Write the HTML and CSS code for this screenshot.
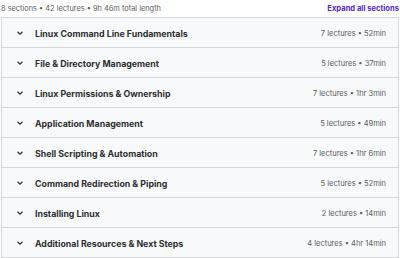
FILE: index.html
```html
<!DOCTYPE html>
<html lang="en">
<head>
  <meta charset="UTF-8">
  <title>Course content</title>
  <link rel="stylesheet" href="styles.css">
</head>
<body>

<div class="curriculum">
  <div class="summary">
    <span class="stats">8 sections • 42 lectures • 9h 46m total length</span>
    <button class="expand-all">Expand all sections</button>
  </div>

  <div class="sections">
    <div class="section">
      <span class="chevron"><svg width="8" height="8" viewBox="0 0 8 8"><path d="M1.5 2.8 L4 5.2 L6.5 2.8" fill="none" stroke="#2d2f31" stroke-width="1.2"/></svg></span>
      <span class="title">Linux Command Line Fundamentals</span>
      <span class="meta">7 lectures • 52min</span>
    </div>
    <div class="section">
      <span class="chevron"><svg width="8" height="8" viewBox="0 0 8 8"><path d="M1.5 2.8 L4 5.2 L6.5 2.8" fill="none" stroke="#2d2f31" stroke-width="1.2"/></svg></span>
      <span class="title">File &amp; Directory Management</span>
      <span class="meta">5 lectures • 37min</span>
    </div>
    <div class="section">
      <span class="chevron"><svg width="8" height="8" viewBox="0 0 8 8"><path d="M1.5 2.8 L4 5.2 L6.5 2.8" fill="none" stroke="#2d2f31" stroke-width="1.2"/></svg></span>
      <span class="title">Linux Permissions &amp; Ownership</span>
      <span class="meta">7 lectures • 1hr 3min</span>
    </div>
    <div class="section">
      <span class="chevron"><svg width="8" height="8" viewBox="0 0 8 8"><path d="M1.5 2.8 L4 5.2 L6.5 2.8" fill="none" stroke="#2d2f31" stroke-width="1.2"/></svg></span>
      <span class="title">Application Management</span>
      <span class="meta">5 lectures • 49min</span>
    </div>
    <div class="section">
      <span class="chevron"><svg width="8" height="8" viewBox="0 0 8 8"><path d="M1.5 2.8 L4 5.2 L6.5 2.8" fill="none" stroke="#2d2f31" stroke-width="1.2"/></svg></span>
      <span class="title">Shell Scripting &amp; Automation</span>
      <span class="meta">7 lectures • 1hr 6min</span>
    </div>
    <div class="section">
      <span class="chevron"><svg width="8" height="8" viewBox="0 0 8 8"><path d="M1.5 2.8 L4 5.2 L6.5 2.8" fill="none" stroke="#2d2f31" stroke-width="1.2"/></svg></span>
      <span class="title">Command Redirection &amp; Piping</span>
      <span class="meta">5 lectures • 52min</span>
    </div>
    <div class="section">
      <span class="chevron"><svg width="8" height="8" viewBox="0 0 8 8"><path d="M1.5 2.8 L4 5.2 L6.5 2.8" fill="none" stroke="#2d2f31" stroke-width="1.2"/></svg></span>
      <span class="title">Installing Linux</span>
      <span class="meta">2 lectures • 14min</span>
    </div>
    <div class="section">
      <span class="chevron"><svg width="8" height="8" viewBox="0 0 8 8"><path d="M1.5 2.8 L4 5.2 L6.5 2.8" fill="none" stroke="#2d2f31" stroke-width="1.2"/></svg></span>
      <span class="title">Additional Resources &amp; Next Steps</span>
      <span class="meta">4 lectures • 4hr 14min</span>
    </div>
  </div>
</div>

</body>
</html>
```

FILE: styles.css
```css
body {
  margin: 0;
  font-family: Inter, 'Liberation Sans', sans-serif;
  color: #2d2f31;
  background: #fff;
}

.curriculum {
  width: 398px;
  margin-left: 1px;
}

.summary {
  display: flex;
  justify-content: space-between;
  align-items: center;
  height: 16px;
  padding-bottom: 1px;
}

.stats {
  font-size: 7.4px;
  color: #595d61;
}

.expand-all {
  background: none;
  border: none;
  padding: 0;
  font-family: inherit;
  font-size: 7.6px;
  font-weight: bold;
  color: #5624d0;
  cursor: pointer;
}

.sections {
  border: 1px solid #d1d7dc;
  border-bottom: none;
}

.section {
  display: flex;
  align-items: center;
  height: 28px;
  padding: 1px 12px 0 14px;
  background: #f7f9fa;
  border-bottom: 1px solid #d1d7dc;
}

.chevron {
  display: flex;
  width: 8px;
  margin-right: 11px;
}

.title {
  flex: 1;
  font-size: 8.8px;
  font-weight: bold;
}

.meta {
  font-size: 7.5px;
  color: #595d61;
}
```
